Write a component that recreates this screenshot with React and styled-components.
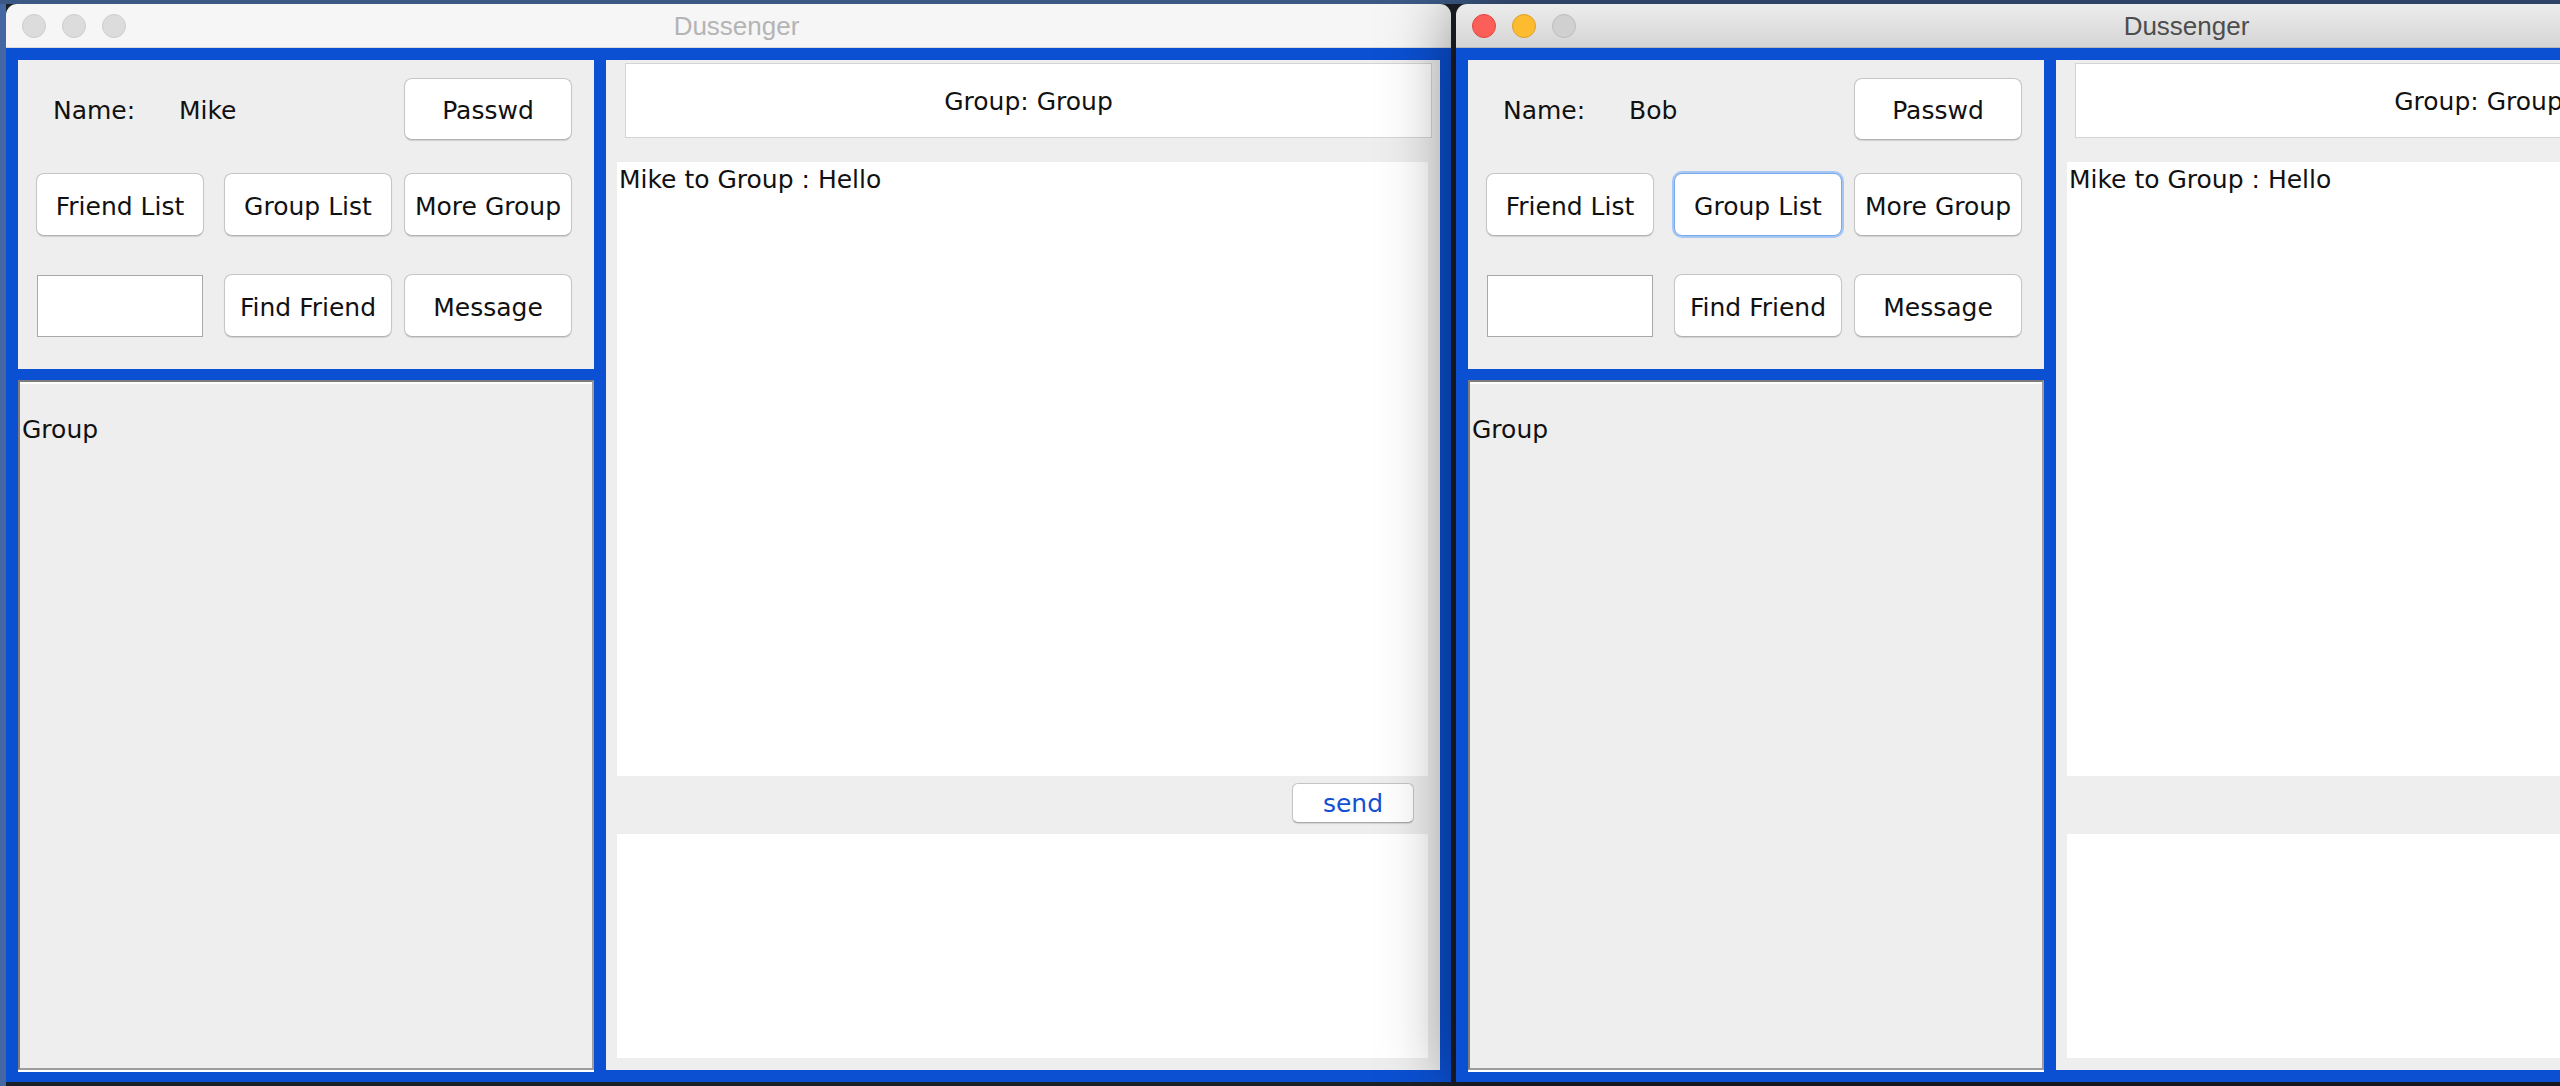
import React from "react";
import styled, { createGlobalStyle } from "styled-components";

const GlobalStyle = createGlobalStyle`
  html, body {
    margin: 0;
    padding: 0;
    overflow: hidden;
    background: #1b1f26;
  }
`;

const UI_FONT = `"DejaVu Sans", "Liberation Sans", sans-serif`;

export default function App() {
  return (
    <>
      <GlobalStyle />
      <Desktop>
        <ChatWindow user="Mike" />
        <ChatWindow user="Bob" active focused="Group List" />
      </Desktop>
    </>
  );
}

function ChatWindow({ user, active, focused }) {
  return (
    <Window $active={active}>
      <TitleBar $active={active}>
        <Lights>
          <Light $color={active ? "red" : "off"} />
          <Light $color={active ? "yellow" : "off"} />
          <Light $color={active ? "grey" : "off"} />
        </Lights>
        <Title $active={active}>Dussenger</Title>
        <span />
      </TitleBar>
      <Content>
        <LeftColumn>
          <ControlPanel>
            <NameRow>
              <NameLabel>Name:</NameLabel>
              <span>{user}</span>
            </NameRow>
            <AquaButton $col={3}>Passwd</AquaButton>

            <AquaButton $tall>Friend List</AquaButton>
            <AquaButton $tall $focus={focused === "Group List"}>Group List</AquaButton>
            <AquaButton $tall>More Group</AquaButton>

            <TextField />
            <AquaButton $tall>Find Friend</AquaButton>
            <AquaButton $tall>Message</AquaButton>
          </ControlPanel>
          <ListPanel>
            <ListItem>Group</ListItem>
          </ListPanel>
        </LeftColumn>
        <ChatPanel>
          <ChatHeader>Group: Group</ChatHeader>
          <MessageArea>Mike to Group : Hello</MessageArea>
          <SendRow>
            <SendButton>send</SendButton>
          </SendRow>
          <InputArea />
        </ChatPanel>
      </Content>
    </Window>
  );
}

const Desktop = styled.div`
  width: 2560px;
  height: 1086px;
  box-sizing: border-box;
  padding: 4px 0 4px 6px;
  display: flex;
  gap: 5px;
  overflow: hidden;
  background:
    linear-gradient(to bottom, #3c5986 0, #3c5986 4px, transparent 4px),
    linear-gradient(to right, #4466a2 0, #4466a2 6px, #1b1f26 6px);
`;

const Window = styled.section`
  flex: 0 0 1445px;
  display: flex;
  flex-direction: column;
  border-radius: 11px 11px 0 0;
  overflow: hidden;
  position: relative;
  z-index: ${(p) => (p.$active ? 2 : 1)};
  box-shadow: ${(p) => (p.$active ? "0 0 70px rgba(0, 0, 0, 0.5)" : "none")};
  font-family: ${UI_FONT};
  font-size: 25px;
  color: #111;
`;

const TitleBar = styled.header`
  height: 44px;
  box-sizing: border-box;
  display: grid;
  grid-template-columns: 1fr auto 1fr;
  align-items: center;
  padding-left: 16px;
  background: ${(p) =>
    p.$active ? "linear-gradient(#ececec, #d5d5d5)" : "#f6f6f6"};
  border-bottom: 1px solid ${(p) => (p.$active ? "#b9b9b9" : "#dadada")};
`;

const Lights = styled.div`
  display: flex;
  gap: 16px;
`;

const lightColors = {
  red: ["#fc5f57", "#df463f"],
  yellow: ["#fdbc2f", "#dd9f25"],
  grey: ["#d0d0d0", "#bdbdbd"],
  off: ["#dcdcdc", "#cdcdcd"],
};

const Light = styled.span`
  width: 24px;
  height: 24px;
  box-sizing: border-box;
  border-radius: 50%;
  background: ${(p) => lightColors[p.$color][0]};
  border: 1px solid ${(p) => lightColors[p.$color][1]};
`;

const Title = styled.div`
  font-family: "Liberation Sans", Arial, sans-serif;
  font-size: 26px;
  padding-top: 2px;
  color: ${(p) => (p.$active ? "#4d4d4d" : "#b4b4b4")};
`;

const Content = styled.div`
  flex: 1;
  background: #0b50d2;
  padding: 12px 11px 12px 12px;
  display: grid;
  grid-template-columns: 576px 1fr;
  column-gap: 12px;
  min-height: 0;
`;

const LeftColumn = styled.div`
  display: grid;
  grid-template-rows: 309px 1fr;
  row-gap: 11px;
`;

const ControlPanel = styled.div`
  background: #eeeeee;
  box-sizing: border-box;
  padding: 18px 0 0 18px;
  display: grid;
  grid-template-columns: 188px 180px 168px;
  grid-template-rows: 95px 101px 63px;
  align-items: start;
`;

const NameRow = styled.div`
  grid-column: 1 / 3;
  height: 62px;
  box-sizing: border-box;
  padding: 3px 0 0 17px;
  display: flex;
  align-items: center;
`;

const NameLabel = styled.span`
  width: 126px;
`;

const AquaButton = styled.button`
  grid-column: ${(p) => p.$col || "auto"};
  width: 168px;
  height: ${(p) => (p.$tall ? "63px" : "62px")};
  box-sizing: border-box;
  padding: 3px 0 0;
  font-family: ${UI_FONT};
  font-size: 25px;
  color: #111;
  background: #fff;
  border: 1px solid ${(p) => (p.$focus ? "#7aa9ea" : "#c6c6c6")};
  border-bottom-color: ${(p) => (p.$focus ? "#7aa9ea" : "#b2b2b2")};
  border-radius: 8px;
  box-shadow: ${(p) =>
    p.$focus
      ? "0 0 0 2px #a6c6f3"
      : "0 1px 1px rgba(0, 0, 0, 0.12)"};
`;

const TextField = styled.div`
  width: 166px;
  height: 62px;
  box-sizing: border-box;
  margin: 1px 0 0 1px;
  background: #fff;
  border: 1px solid #a8a8a8;
`;

const ListPanel = styled.div`
  background: #eeeeee;
  border-top: 2px solid #7c7c7c;
  border-left: 2px solid #7c7c7c;
  border-right: 2px solid #9c9c9c;
  border-bottom: 2px solid #9c9c9c;
  box-shadow: inset 0 2px 0 #fff, 0 2px 0 #fff;
  padding: 32px 0 0 2px;
`;

const ListItem = styled.div`
  line-height: 32px;
`;

const ChatPanel = styled.div`
  background: #eeeeee;
  display: flex;
  flex-direction: column;
  min-width: 0;
`;

const ChatHeader = styled.div`
  margin: 3px 8px 0 19px;
  height: 75px;
  box-sizing: border-box;
  padding-top: 2px;
  background: #fff;
  border: 1px solid #d4d4d4;
  display: flex;
  align-items: center;
  justify-content: center;
  white-space: nowrap;
`;

const MessageArea = styled.div`
  margin: 24px 12px 0 11px;
  height: 614px;
  box-sizing: border-box;
  background: #fff;
  padding: 2px 2px 0;
  line-height: 32px;
  white-space: nowrap;
`;

const SendRow = styled.div`
  height: 58px;
  display: flex;
  justify-content: flex-end;
  align-items: flex-start;
  padding: 7px 26px 0 0;
  box-sizing: border-box;
`;

const SendButton = styled.button`
  width: 122px;
  height: 40px;
  padding: 1px 0 0;
  font-family: ${UI_FONT};
  font-size: 25px;
  color: #1450d2;
  background: #fff;
  border: 1px solid #c4c4c4;
  border-bottom-color: #a9a9a9;
  border-radius: 6px;
  box-shadow: 0 1px 1px rgba(0, 0, 0, 0.12);
`;

const InputArea = styled.div`
  margin: 0 12px 0 11px;
  height: 224px;
  background: #fff;
`;
